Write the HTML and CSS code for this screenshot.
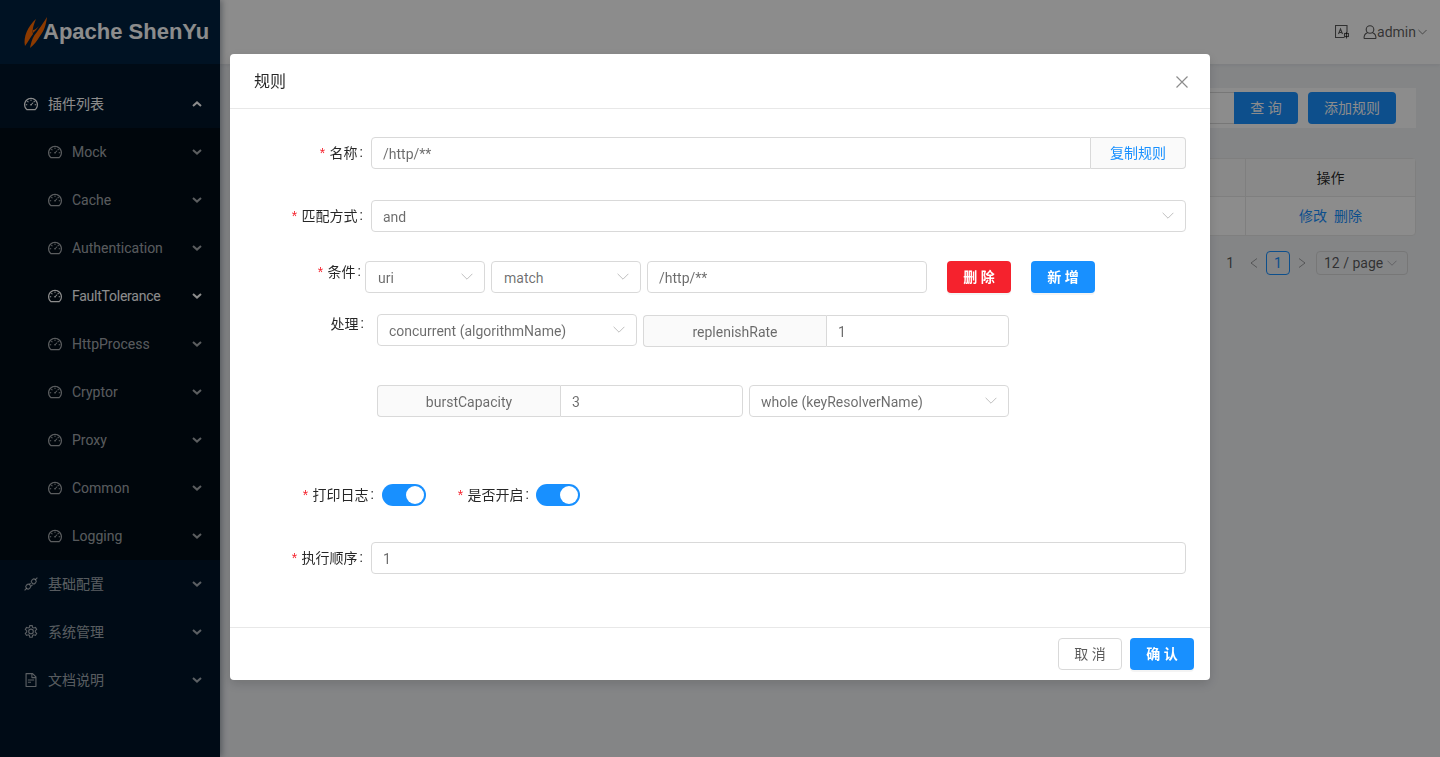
FILE: index.html
```html
<!DOCTYPE html>
<html lang="zh">
<head>
<meta charset="utf-8">
<title>Apache ShenYu</title>
<link rel="stylesheet" href="styles.css">
</head>
<body>
<svg class="defs" aria-hidden="true">
  <symbol id="i-dash" viewBox="64 64 896 896"><path d="M924.8 385.6a446.7 446.7 0 0 0-96-142.4 446.7 446.7 0 0 0-142.4-96C631.1 123.8 572.5 112 512 112s-119.1 11.8-174.4 35.2a446.7 446.7 0 0 0-142.4 96 446.7 446.7 0 0 0-96 142.4C75.8 440.9 64 499.5 64 560c0 132.7 58.3 257.7 159.9 343.1l1.7 1.4c5.8 4.8 13.1 7.5 20.6 7.5h531.7c7.5 0 14.8-2.7 20.6-7.5l1.7-1.4C901.7 817.7 960 692.7 960 560c0-60.5-11.9-119.1-35.2-174.4zM761.4 836H262.6A371.12 371.12 0 0 1 140 560c0-99.4 38.7-192.8 109-263 70.3-70.3 163.7-109 263-109 99.4 0 192.8 38.7 263 109 70.3 70.3 109 163.7 109 263 0 105.6-44.5 205.5-122.6 276z"/><path d="M623.5 421.5a8.03 8.03 0 0 0-11.3 0L527.7 506c-18.7-5-39.4-.2-54.1 14.5a55.95 55.95 0 0 0 0 79.2 55.95 55.95 0 0 0 79.2 0 55.88 55.88 0 0 0 14.5-54.1l84.5-84.5c3.1-3.1 3.1-8.2 0-11.3l-28.3-28.3zM490 320h44c4.4 0 8-3.6 8-8v-80c0-4.4-3.6-8-8-8h-44c-4.4 0-8 3.6-8 8v80c0 4.4 3.6 8 8 8zm260 218v44c0 4.4 3.6 8 8 8h80c4.4 0 8-3.6 8-8v-44c0-4.4-3.6-8-8-8h-80c-4.4 0-8 3.6-8 8zm12.7-197.2l-31.1-31.1a8.03 8.03 0 0 0-11.3 0l-56.6 56.6a8.03 8.03 0 0 0 0 11.3l31.1 31.1c3.1 3.1 8.2 3.1 11.3 0l56.6-56.6c3.1-3.1 3.1-8.2 0-11.3zm-458.6-31.1a8.03 8.03 0 0 0-11.3 0l-31.1 31.1a8.03 8.03 0 0 0 0 11.3l56.6 56.6c3.1 3.1 8.2 3.1 11.3 0l31.1-31.1c3.1-3.1 3.1-8.2 0-11.3l-56.6-56.6zM262 530h-80c-4.4 0-8 3.6-8 8v44c0 4.4 3.6 8 8 8h80c4.4 0 8-3.6 8-8v-44c0-4.4-3.6-8-8-8z"/></symbol>
  <symbol id="i-api" viewBox="0 0 14 14"><g fill="none" stroke="currentColor" stroke-width="1.100"><path d="M.6 13.400 3 11M11 3l2.400-2.400"/><rect x="7.400" y="2.200" width="4.800" height="4.400" rx="2" transform="rotate(-45 9.800 4.400)"/><rect x="1.800" y="7.400" width="4.800" height="4.400" rx="2" transform="rotate(-45 4.200 9.600)"/><path d="m5.400 7.400 1.200-1.200M7.200 9l1.200-1.200"/></g></symbol>
  <symbol id="i-gear" viewBox="0 0 14 14"><g fill="none" stroke="currentColor" stroke-width="1.100"><path d="M5.800.6h2.400l.4 1.800 1.100.6 1.800-.6 1.200 2.100-1.400 1.200v1.400l1.400 1.200-1.200 2.100-1.800-.6-1.100.6-.4 1.800H5.800l-.4-1.800-1.100-.6-1.800.6-1.200-2.100 1.400-1.200V5.700L1.300 4.500l1.200-2.100 1.800.6 1.100-.6z"/><circle cx="7" cy="6.400" r="2.300"/></g></symbol>
  <symbol id="i-file" viewBox="64 64 896 896"><path d="M854.6 288.6L639.4 73.4c-6-6-14.1-9.4-22.6-9.4H192c-17.7 0-32 14.3-32 32v832c0 17.7 14.3 32 32 32h640c17.7 0 32-14.3 32-32V311.3c0-8.5-3.4-16.7-9.4-22.7zM790.2 326H602V137.8L790.2 326zm1.8 562H232V136h302v216a42 42 0 0 0 42 42h216v494zM504 618H320c-4.4 0-8 3.6-8 8v48c0 4.4 3.6 8 8 8h184c4.4 0 8-3.6 8-8v-48c0-4.4-3.6-8-8-8zM312 490v48c0 4.4 3.6 8 8 8h384c4.4 0 8-3.6 8-8v-48c0-4.4-3.6-8-8-8H320c-4.4 0-8 3.6-8 8z"/></symbol>
  <symbol id="i-menu-arrow" viewBox="0 0 10 6"><path d="M1 1l4 3.600L9 1" fill="none" stroke="currentColor" stroke-width="2"/></symbol>
  <symbol id="i-down" viewBox="0 0 12 7"><path d="M.6.800 6 6.200 11.400.800" fill="none" stroke="currentColor" stroke-width="1"/></symbol>
  <symbol id="i-left" viewBox="0 0 8 10"><path d="M7 .5 1 5l6 4.500" fill="none" stroke="currentColor" stroke-width="1"/></symbol>
  <symbol id="i-right" viewBox="0 0 8 10"><path d="M1 .5 7 5 1 9.500" fill="none" stroke="currentColor" stroke-width="1"/></symbol>
</svg>

<div class="app">
  <aside class="sider">
    <div class="logo">
      <svg class="logo-mark" viewBox="0 0 23 31" aria-hidden="true"><path d="M1 29C-1 20 4 9 12 2 9 9 8 14 9 17 6 21 4 25 1 29z"/><path d="M6 31C7 26 8 22 10 19 13 15 18 8 23 0 22 8 20 14 16 19 13 24 10 28 6 31z"/><path d="M9 13C11 13 13 11 15 9 13 12 11 14 9 16z"/></svg>
      <span class="logo-text">Apache ShenYu</span>
    </div>
    <nav class="menu">
      <div class="menu-item open"><svg class="ic"><use href="#i-dash"/></svg><span class="menu-label cjk">插件列表</span><svg class="arrow up"><use href="#i-menu-arrow"/></svg></div>
      <div class="submenu">
        <div class="sub-item"><svg class="ic"><use href="#i-dash"/></svg><span class="menu-label">Mock</span><svg class="arrow"><use href="#i-menu-arrow"/></svg></div>
        <div class="sub-item"><svg class="ic"><use href="#i-dash"/></svg><span class="menu-label">Cache</span><svg class="arrow"><use href="#i-menu-arrow"/></svg></div>
        <div class="sub-item"><svg class="ic"><use href="#i-dash"/></svg><span class="menu-label">Authentication</span><svg class="arrow"><use href="#i-menu-arrow"/></svg></div>
        <div class="sub-item active"><svg class="ic"><use href="#i-dash"/></svg><span class="menu-label">FaultTolerance</span><svg class="arrow"><use href="#i-menu-arrow"/></svg></div>
        <div class="sub-item"><svg class="ic"><use href="#i-dash"/></svg><span class="menu-label">HttpProcess</span><svg class="arrow"><use href="#i-menu-arrow"/></svg></div>
        <div class="sub-item"><svg class="ic"><use href="#i-dash"/></svg><span class="menu-label">Cryptor</span><svg class="arrow"><use href="#i-menu-arrow"/></svg></div>
        <div class="sub-item"><svg class="ic"><use href="#i-dash"/></svg><span class="menu-label">Proxy</span><svg class="arrow"><use href="#i-menu-arrow"/></svg></div>
        <div class="sub-item"><svg class="ic"><use href="#i-dash"/></svg><span class="menu-label">Common</span><svg class="arrow"><use href="#i-menu-arrow"/></svg></div>
        <div class="sub-item"><svg class="ic"><use href="#i-dash"/></svg><span class="menu-label">Logging</span><svg class="arrow"><use href="#i-menu-arrow"/></svg></div>
      </div>
      <div class="menu-item"><svg class="ic"><use href="#i-api"/></svg><span class="menu-label cjk">基础配置</span><svg class="arrow"><use href="#i-menu-arrow"/></svg></div>
      <div class="menu-item"><svg class="ic"><use href="#i-gear"/></svg><span class="menu-label cjk">系统管理</span><svg class="arrow"><use href="#i-menu-arrow"/></svg></div>
      <div class="menu-item"><svg class="ic"><use href="#i-file"/></svg><span class="menu-label cjk">文档说明</span><svg class="arrow"><use href="#i-menu-arrow"/></svg></div>
    </nav>
  </aside>

  <main class="main">
    <header class="topbar">
      <svg class="lang-icon" viewBox="0 0 14 14" aria-hidden="true"><g fill="none" stroke="currentColor" stroke-width="1.100"><path d="M9.500 12.500H.5V.5h11.500v7"/><path d="m3.500 9 2-5 2 5M4.300 7.500h2.400"/><rect x="9.500" y="8.500" width="4" height="3"/><path d="M11.500 7v6.500"/></g></svg>
      <div class="user">
        <svg class="user-icon" viewBox="0 0 14 14" aria-hidden="true"><g fill="none" stroke="currentColor" stroke-width="1.100"><circle cx="7" cy="4.500" r="3.800"/><path d="M1 13.500c0-3.500 2-5.300 3.500-5.700M13 13.500c0-3.500-2-5.300-3.500-5.700M1 13.500h12"/></g></svg>
        <span class="user-name">admin</span>
        <svg class="user-arrow"><use href="#i-down"/></svg>
      </div>
    </header>
    <section class="content">
      <div class="toolbar">
        <span class="search-input"></span>
        <span class="btn-query">查 询</span>
        <span class="btn-add">添加规则</span>
      </div>
      <div class="table">
        <div class="thead"><span class="cell-spacer"></span><span class="cell-op">操作</span></div>
        <div class="trow"><span class="cell-spacer"></span><span class="cell-op link"><span>修改</span><span>删除</span></span></div>
      </div>
      <div class="pager">
        <span class="pager-total">1</span>
        <svg class="pager-nav"><use href="#i-left"/></svg>
        <span class="pager-cur">1</span>
        <svg class="pager-nav"><use href="#i-right"/></svg>
        <span class="pager-size">12 / page<svg class="pager-arrow"><use href="#i-down"/></svg></span>
      </div>
    </section>
  </main>
</div>

<div class="mask">
  <div class="modal">
    <div class="modal-head">
      <span class="modal-title">规则</span>
      <svg class="modal-close" viewBox="0 0 12 12" aria-hidden="true"><path d="M.5.500l11 11M11.500.500l-11 11" fill="none" stroke="currentColor" stroke-width="1.200"/></svg>
    </div>
    <div class="modal-body">
      <div class="row row-name">
        <label class="lbl"><i>*</i>名称<b>:</b></label>
        <div class="group grow"><span class="input grow">/http/**</span><span class="addon-copy">复制规则</span></div>
      </div>
      <div class="row row-match">
        <label class="lbl"><i>*</i>匹配方式<b>:</b></label>
        <span class="select grow">and<svg class="sel-arrow"><use href="#i-down"/></svg></span>
      </div>
      <div class="row row-cond">
        <label class="lbl lbl-cond"><i>*</i>条件<b>:</b></label>
        <span class="select w120">uri<svg class="sel-arrow"><use href="#i-down"/></svg></span>
        <span class="select w150">match<svg class="sel-arrow"><use href="#i-down"/></svg></span>
        <span class="input w280">/http/**</span>
        <span class="btn btn-danger">删 除</span>
        <span class="btn btn-primary">新 增</span>
      </div>
      <div class="row row-handle">
        <label class="lbl lbl-handle">处理<b>:</b></label>
        <div class="handle">
          <div class="handle-line">
            <span class="select w260">concurrent (algorithmName)<svg class="sel-arrow"><use href="#i-down"/></svg></span>
            <div class="group w366 drop"><span class="addon">replenishRate</span><span class="input grow">1</span></div>
          </div>
          <div class="handle-line second">
            <div class="group w366"><span class="addon">burstCapacity</span><span class="input grow">3</span></div>
            <span class="select w260">whole (keyResolverName)<svg class="sel-arrow"><use href="#i-down"/></svg></span>
          </div>
        </div>
      </div>
      <div class="row row-switch">
        <label class="lbl lbl-sw"><i>*</i>打印日志<b>:</b></label>
        <span class="switch"></span>
        <label class="lbl lbl-sw2"><i>*</i>是否开启<b>:</b></label>
        <span class="switch"></span>
      </div>
      <div class="row row-order">
        <label class="lbl"><i>*</i>执行顺序<b>:</b></label>
        <span class="input grow">1</span>
      </div>
    </div>
    <div class="modal-foot">
      <span class="btn btn-default">取 消</span>
      <span class="btn btn-primary">确 认</span>
    </div>
  </div>
</div>
</body>
</html>
```
FILE: styles.css
```css
* { box-sizing: border-box; }
html, body { margin: 0; height: 100%; overflow: hidden; }
body {
  font-family: Roboto, "Noto Sans CJK SC", sans-serif;
  font-size: 14px;
  color: rgba(0,0,0,.65);
  background: #f0f2f5;
}
.defs { width: 0; height: 0; display: block; }
.app { display: flex; height: 757px; }

.sider {
  width: 220px;
  flex: none;
  background: #001529;
  box-shadow: 2px 0 6px rgba(0,21,41,.35);
  position: relative;
  z-index: 2;
}
.logo {
  height: 64px;
  background: #002140;
  display: flex;
  align-items: center;
  padding-left: 24px;
}
.logo-mark { width: 23px; height: 31px; fill: #ff6a00; flex: none; overflow: visible; margin-right: -4px; }
.logo-text {
  font-family: "Liberation Sans", sans-serif;
  font-weight: 700;
  font-size: 22px;
  color: #fff;
  white-space: nowrap;
}
.menu { padding-top: 16px; color: rgba(255,255,255,.65); }
.menu-item, .sub-item {
  height: 48px;
  display: flex;
  align-items: center;
  padding-left: 24px;
  padding-right: 18px;
}
.sub-item { padding-left: 48px; }
.menu-item.open { color: #fff; }
.sub-item.active { color: #fff; letter-spacing: -.25px; }
.submenu { background: #000c17; }
.ic { width: 14px; height: 14px; fill: currentColor; margin-right: 10px; flex: none; }
.menu-label { flex: 1; }
.menu-label.cjk { margin-top: -2px; }
.arrow { width: 10px; height: 6px; flex: none; margin-top: -1px; }
.arrow.up { transform: rotate(180deg); }

.main { flex: 1; min-width: 0; display: flex; flex-direction: column; }
.topbar {
  height: 64px;
  flex: none;
  background: #fff;
  box-shadow: 0 1px 4px rgba(0,21,41,.08);
  display: flex;
  align-items: center;
  justify-content: flex-end;
  padding-right: 13px;
}
.lang-icon { width: 14px; height: 14px; margin-right: 14px; }
.user { display: flex; align-items: center; }
.user-icon { width: 14px; height: 14px; }
.user-arrow { width: 9px; height: 6px; margin-left: 2px; }
.content { flex: 1; padding: 24px 24px 0 24px; }
.toolbar {
  height: 40px;
  background: #fff;
  display: flex;
  align-items: center;
  justify-content: flex-end;
  padding-right: 20px;
}
.search-input { width: 200px; height: 32px; border: 1px solid #d9d9d9; border-right: 0; }
.btn-query, .btn-add {
  height: 32px;
  background: #1890ff;
  color: #fff;
  display: flex;
  align-items: center;
  justify-content: center;
  padding-bottom: 2px;
}
.btn-query { width: 64px; border-radius: 0 4px 4px 0; }
.btn-add { width: 88px; border-radius: 4px; margin-left: 10px; }
.table { margin-top: 30px; background: #fff; border: 1px solid #e8e8e8; border-radius: 4px; }
.thead, .trow { display: flex; height: 38px; }
.thead { background: #fafafa; border-bottom: 1px solid #e8e8e8; color: rgba(0,0,0,.85); }
.cell-spacer { flex: 1; }
.cell-op {
  width: 170px;
  border-left: 1px solid #e8e8e8;
  display: flex;
  align-items: center;
  justify-content: center;
  gap: 7px;
  padding-bottom: 2px;
}
.link { color: #1890ff; }
.pager { display: flex; align-items: center; justify-content: flex-end; margin-top: 15px; padding-right: 8px; height: 24px; }
.pager-total { margin-right: 8px; }
.pager-nav { width: 8px; height: 10px; color: rgba(0,0,0,.35); flex: none; margin: 0 8px; }
.pager-cur {
  width: 24px; height: 24px; border: 1px solid #1890ff; border-radius: 4px; color: #1890ff;
  display: flex; align-items: center; justify-content: center;
}
.pager-size {
  width: 92px; height: 24px; margin-left: 2px; border: 1px solid #d9d9d9; border-radius: 4px;
  display: flex; align-items: center; padding-left: 7px;
}
.pager-arrow { width: 10px; height: 6px; margin-left: 4px; color: rgba(0,0,0,.3); }

.mask {
  position: fixed;
  inset: 0;
  z-index: 10;
  background: rgba(0,0,0,.45);
  display: flex;
  justify-content: center;
  align-items: flex-start;
  padding-top: 54px;
}
.modal {
  width: 980px;
  height: 626px;
  background: #fff;
  border-radius: 4px;
  box-shadow: 0 4px 12px rgba(0,0,0,.15);
  display: flex;
  flex-direction: column;
}
.modal-head {
  height: 55px;
  flex: none;
  border-bottom: 1px solid #e8e8e8;
  display: flex;
  align-items: center;
  justify-content: space-between;
  padding: 0 22px 0 24px;
}
.modal-title { font-size: 16px; color: rgba(0,0,0,.85); margin-top: -2px; }
.modal-close { width: 12px; height: 12px; color: rgba(0,0,0,.45); margin-top: 2px; }
.modal-body { flex: 1; padding-right: 24px; }
.modal-foot {
  height: 53px;
  flex: none;
  border-top: 1px solid #e8e8e8;
  display: flex;
  align-items: center;
  justify-content: flex-end;
  gap: 8px;
  padding-right: 16px;
}

.row { display: flex; align-items: center; }
.row-name { margin-top: 28px; }
.row-match { margin-top: 31px; }
.row-cond { margin-top: 29px; }
.row-handle { margin-top: 21px; align-items: flex-start; }
.row-switch { margin-top: 67px; }
.row-order { margin-top: 36px; }

.lbl {
  width: 141px;
  flex: none;
  padding-right: 8px;
  padding-bottom: 2px;
  display: flex;
  justify-content: flex-end;
  align-items: center;
  color: rgba(0,0,0,.85);
  white-space: nowrap;
  font-size: 14px;
}
.lbl i {
  color: #f5222d;
  font-style: normal;
  font-family: "Liberation Mono", monospace;
  font-size: 14px;
  line-height: 14px;
  margin-right: 3px;
  margin-top: 5px;
}
.lbl b { font-weight: 400; margin-left: 2px; }
.lbl-cond { width: 135px; padding-right: 4px; margin-top: -10px; }
.lbl-handle { width: 147px; padding-right: 13px; height: 20px; margin-top: 0; }
.lbl-sw { width: 152px; padding-right: 8px; }
.lbl-sw2 { width: 110px; padding-right: 7px; }

.input, .select {
  height: 32px;
  border: 1px solid #d9d9d9;
  border-radius: 4px;
  background: #fff;
  color: rgba(0,0,0,.58);
  padding: 2px 11px 0;
  display: flex;
  align-items: center;
  white-space: nowrap;
}
.select { justify-content: space-between; }
.sel-arrow { width: 12px; height: 7px; color: rgba(0,0,0,.25); flex: none; margin-top: -4px; }
.grow { flex: 1; min-width: 0; }
.w120 { width: 120px; margin-right: 6px; padding-left: 12px; }
.w150 { width: 150px; margin-right: 6px; padding-left: 12px; }
.w280 { width: 280px; margin-right: 20px; }
.w260 { width: 260px; flex: none; }
.w366 { width: 366px; flex: none; }

.group { display: flex; height: 32px; }
.group .input { border-radius: 0 4px 4px 0; }
.row-name .group .input { border-radius: 4px 0 0 4px; }
.addon {
  width: 183px;
  flex: none;
  background: #fafafa;
  border: 1px solid #d9d9d9;
  border-right: 0;
  border-radius: 4px 0 0 4px;
  color: rgba(0,0,0,.58);
  display: flex;
  align-items: center;
  justify-content: center;
  padding-top: 2px;
}
.addon-copy {
  width: 95px;
  flex: none;
  background: #fafafa;
  border: 1px solid #d9d9d9;
  border-left: 0;
  border-radius: 0 4px 4px 0;
  color: #1890ff;
  display: flex;
  align-items: center;
  justify-content: center;
  padding-bottom: 2px;
}
.drop { margin-top: 1px; }
.handle { display: flex; flex-direction: column; }
.handle-line { display: flex; gap: 6px; align-items: flex-start; }
.handle-line.second { margin-top: 38px; }

.btn {
  height: 32px;
  border-radius: 4px;
  display: flex;
  align-items: center;
  justify-content: center;
  width: 64px;
  flex: none;
  padding-bottom: 3px;
}
.btn-danger { background: #f5222d; color: #fff; font-weight: 600; margin-right: 20px; box-shadow: 0 2px 0 rgba(0,0,0,.045); }
.btn-primary { background: #1890ff; color: #fff; font-weight: 600; box-shadow: 0 2px 0 rgba(0,0,0,.045); }
.btn-default { background: #fff; border: 1px solid #d9d9d9; color: rgba(0,0,0,.65); }

.switch {
  width: 44px;
  height: 22px;
  border-radius: 11px;
  background: #1890ff;
  position: relative;
  flex: none;
}
.switch::after {
  content: "";
  position: absolute;
  top: 2px;
  right: 2px;
  width: 18px;
  height: 18px;
  border-radius: 50%;
  background: #fff;
}
```
